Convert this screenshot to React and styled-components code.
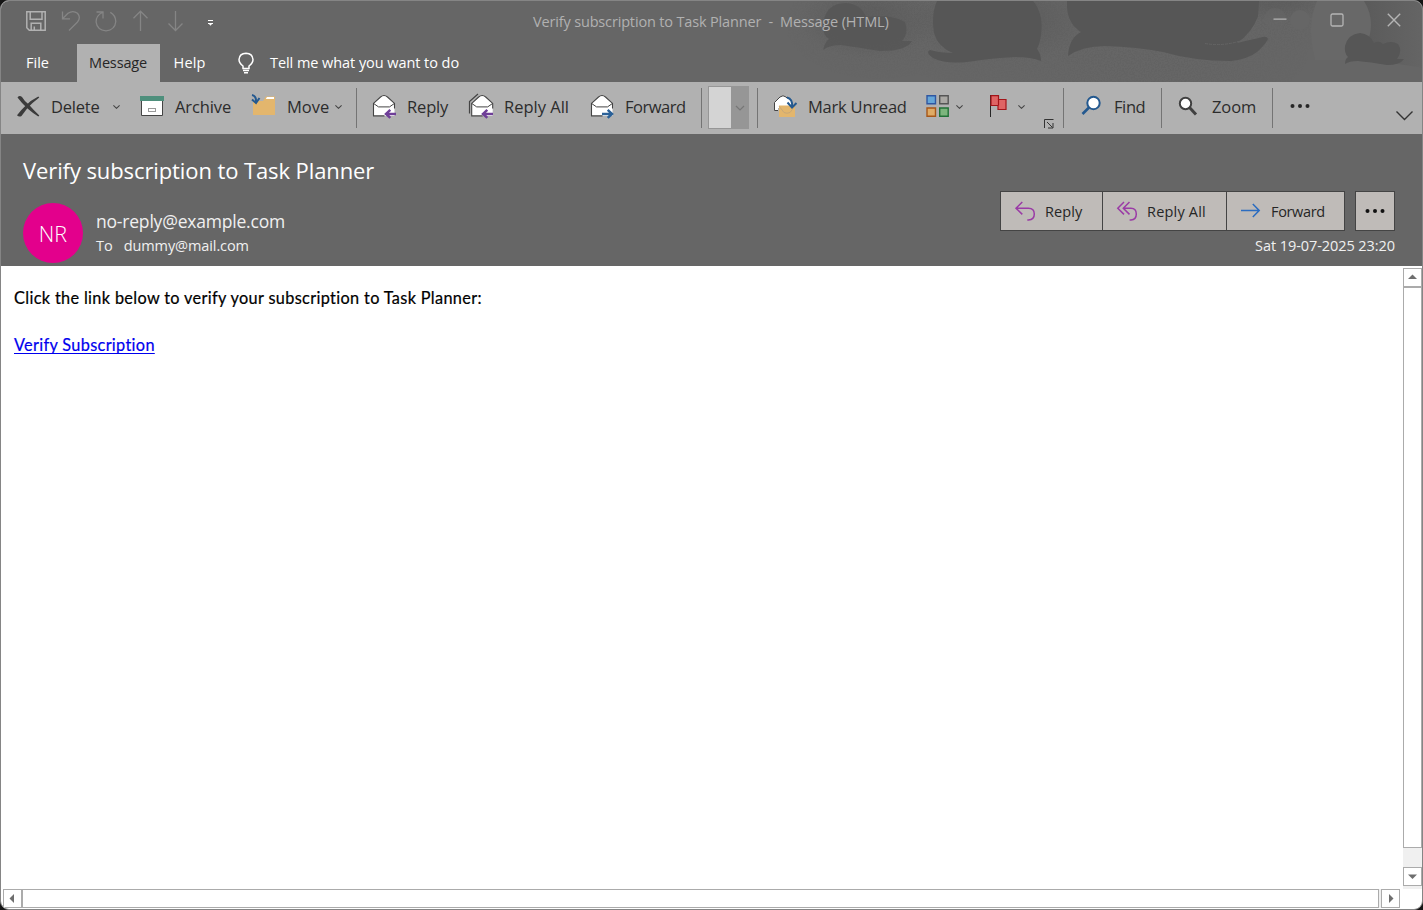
import React from "react";
import styled, { createGlobalStyle } from "styled-components";

const GlobalStyle = createGlobalStyle`
  * { box-sizing: border-box; }
  html, body { margin: 0; height: 100%; background: #151515; overflow: hidden; }
  #root { height: 100%; }
  button { border: 0; margin: 0; padding: 0; background: none; color: inherit; font: inherit; }
`;

const Window = styled.div`
  position: relative;
  display: flex;
  flex-direction: column;
  width: 1423px;
  height: 910px;
  overflow: hidden;
  border: 1px solid #858585;
  border-radius: 9px;
  background: #fff;
  font-family: "Open Sans", "Noto Sans", sans-serif;
`;

const Label = styled.span`
  display: block;
  white-space: pre;
  font-size: ${(p) => p.$size || 14.5}px;
  letter-spacing: ${(p) => p.$track || 0}px;
  line-height: 20px;
`;

/* top chrome */
const Chrome = styled.header`
  position: relative;
  flex: none;
  height: 81px;
  background: #666;
  display: flex;
  flex-direction: column;
`;
const Backdrop = styled.svg`
  position: absolute;
  top: 0;
  right: 0;
  display: block;
`;
const TitleBar = styled.div`
  position: relative;
  height: 43px;
  display: grid;
  grid-template-columns: 532px 1fr auto;
`;
const QuickAccess = styled.div`
  display: flex;
  align-items: center;
  gap: 11px;
  padding: 0 0 3px 23px;
  svg { display: block; }
`;
const WindowTitle = styled.div`
  padding-top: 11px;
  color: #b1b1b1;
`;
const WindowButtons = styled.div`
  display: flex;
  align-items: center;
  gap: 33px;
  padding: 0 16px 5px 0;
  button, svg { display: block; }
`;
const TabStrip = styled.nav`
  position: relative;
  height: 38px;
  display: flex;
  color: #fff;
`;
const Tab = styled.button`
  height: 38px;
  width: ${(p) => p.$width}px;
  display: flex;
  justify-content: center;
  align-items: center;
  padding-right: ${(p) => p.$right || 0}px;
  color: ${(p) => (p.$active ? "#262626" : "#fff")};
  background: ${(p) => (p.$active ? "#b1b1b1" : "transparent")};
`;
const TellMe = styled.div`
  display: flex;
  align-items: center;
  gap: 13px;
  margin-left: 16px;
`;

/* ribbon */
const Ribbon = styled.div`
  flex: none;
  height: 52px;
  display: flex;
  background: #b1b1b1;
  color: #2c2c2c;
`;
const Command = styled.button`
  height: 48px;
  width: ${(p) => p.$width}px;
  padding-left: ${(p) => p.$left || 0}px;
  padding-right: ${(p) => p.$right || 0}px;
  display: flex;
  align-items: center;
  gap: 11px;
  flex: none;
  > svg { flex: none; display: block; }
  > ${Label} { padding-top: 2px; }
`;
const Caret = styled.svg`
  margin: 1px 0 0 ${(p) => (p.$tight ? "-5px" : "auto")};
`;
const Divider = styled.span`
  flex: none;
  width: 1px;
  height: 40px;
  margin-top: 6px;
  background: #747474;
`;
const StepBox = styled.div`
  flex: none;
  width: 41px;
  height: 43px;
  margin: 4px 8px 0 6px;
  display: grid;
  grid-template-columns: 22px 1fr;
  border: 1px solid #969696;
  background: #d4d4d4;
`;
const StepArrow = styled.span`
  display: grid;
  place-items: center;
  background: #969696;
`;
const Launcher = styled.button`
  align-self: flex-end;
  margin: 0 9px 5px 0;
  height: 10px;
  svg { display: block; }
`;
const Collapse = styled.button`
  margin: 0 8px 13px auto;
  align-self: flex-end;
  svg { display: block; }
`;

/* message header */
const MessageHeader = styled.section`
  flex: none;
  height: 132px;
  padding: 22px 27px 0 22px;
  background: #666;
  color: #fff;
`;
const Subject = styled.h1`
  margin: 0;
  height: 47px;
  font-weight: 400;
  padding-top: 4px;
`;
const Sender = styled.div`
  display: flex;
`;
const Avatar = styled.div`
  width: 60px;
  height: 60px;
  border-radius: 50%;
  background: #e3008c;
  display: grid;
  place-items: center;
  font-weight: 300;
  padding-top: 2px;
`;
const Addresses = styled.div`
  margin: 8px 0 0 13px;
  color: #f0f0f0;
`;
const ToRow = styled.div`
  display: flex;
  gap: 11px;
  margin-top: 5px;
`;
const ActionColumn = styled.div`
  margin: -12px 0 0 auto;
  display: flex;
  flex-direction: column;
  align-items: flex-end;
  gap: 5px;
  color: #f0f0f0;
`;
const Actions = styled.div`
  display: flex;
  gap: 10px;
`;
const ActionGroup = styled.div`
  display: flex;
  border: 1px solid #444;
  background: #bfbbb8;
`;
const Action = styled.button`
  width: ${(p) => p.$width}px;
  height: 38px;
  padding-left: 13px;
  display: flex;
  align-items: center;
  gap: 9px;
  color: #262626;
  & + & { border-left: 1px solid #444; }
  svg { flex: none; display: block; }
  > ${Label} { padding-top: 2px; }
`;
const MoreAction = styled.button`
  width: 38px;
  height: 38px;
  display: grid;
  place-items: center;
  padding: 0 1px 1px 0;
  svg { display: block; }
`;

/* reading pane */
const Reader = styled.main`
  flex: 1;
  min-height: 0;
  display: grid;
  grid-template-columns: 1fr 20px;
  grid-template-rows: 1fr 20px;
`;
const Body = styled.article`
  padding: 22px 13px;
  font-family: Lato, sans-serif;
  color: #000;
  -webkit-text-stroke: 0.2px currentColor;
`;
const Link = styled.a`
  display: inline-block;
  margin-top: 27px;
  color: #0000ee;
  text-decoration: underline;
  text-decoration-thickness: 1px;
  text-underline-offset: 2px;
  text-decoration-skip-ink: none;
`;
const VScroll = styled.div`
  margin: 2px 0 0 1px;
  width: 19px;
  display: flex;
  flex-direction: column;
  background: #f0f0f0;
`;
const HScroll = styled.div`
  height: 19px;
  margin: 0 2px 0 2px;
  display: flex;
  background: #f0f0f0;
`;
const ScrollButton = styled.button`
  flex: none;
  width: 19px;
  height: 19px;
  border: 1px solid #ababab;
  background: #fff;
  display: grid;
  place-items: center;
  svg { display: block; }
`;
const VThumb = styled.div`
  height: 561px;
  border: 1px solid #ababab;
  background: #fff;
  margin-bottom: 19px;
`;
const HThumb = styled.div`
  width: 1357px;
  border: 1px solid #ababab;
  background: #fff;
  margin-right: 2px;
`;

const Icon = ({ w = 24, h = w, children, ...rest }) => (
  <svg width={w} height={h} viewBox={`0 0 ${w} ${h}`} fill="none" {...rest}>{children}</svg>
);

const CaretDown = ({ tight }) => (
  <Caret $tight={tight} width="7" height="4" viewBox="0 0 7 4" fill="none" stroke="#444" strokeWidth="1.1">
    <path d="M.4.4 3.5 3.3 6.6.4" />
  </Caret>
);

const Arrowhead = ({ d }) => (
  <Icon w={9} h={9}><path d={d} fill="#6e6e6e" /></Icon>
);

const Dots = ({ fill }) => (
  <Icon w={20} h={6} fill={fill}>
    <circle cx="2.5" cy="3" r="2" /><circle cx="10" cy="3" r="2" /><circle cx="17.5" cy="3" r="2" />
  </Icon>
);

const Envelope = () => (
  <>
    <path d="M1.5 10 9 3.2Q12 .8 15 3.2L22.5 10V22.5H1.5Z" fill="#fff" />
    <path d="M12.5 22.5H1.5V10L8.5 3.6Q12 .7 15.5 3.6L22.5 10V15" stroke="#444" strokeWidth="1.1" />
    <path d="M1.5 10 6.5 13.5H17.5L22.5 10" stroke="#444" />
  </>
);
const ArrowLeft = () => <path d="M24 20.5H13.5M18.3 16.5 14 20.5 18.3 24.5" stroke="#6f3f98" strokeWidth="2.5" />;
const ReplyMail = () => <Icon overflow="visible"><g transform="translate(0 -.6)"><Envelope /><ArrowLeft /></g></Icon>;
const ReplyAllMail = () => (
  <Icon overflow="visible">
    <path d="M.5 19.5V7.5L9 0" stroke="#444" strokeWidth="1.2" />
    <g transform="translate(1.2 -.6)"><Envelope /></g>
    <g transform="translate(0 -.6)"><ArrowLeft /></g>
  </Icon>
);
const ForwardMail = () => (
  <Icon overflow="visible">
    <g transform="translate(0 -.6)">
      <Envelope />
      <path d="M12 20.5H22.5M17.7 16.5 22 20.5 17.7 24.5" stroke="#2b6198" strokeWidth="2.5" />
    </g>
  </Icon>
);

const ReplyArrow = () => (
  <Icon w={22} stroke="#9a3ba6" strokeWidth="1.5">
    <path d="M8.3 2 2 8.2 8.3 14.4M2 8.2H14.5Q20.3 8.2 20.3 14T14.5 20H13.3" />
  </Icon>
);
const ReplyAllArrow = () => (
  <Icon w={22} stroke="#9a3ba6" strokeWidth="1.5">
    <path d="M8 2 1.8 8.2 8 14.4M13.5 2 7.3 8.2 13.5 14.4M7.3 8.2H15Q20.3 8.2 20.3 14T15 20H13.6" />
  </Icon>
);

const Art = () => (
  <Backdrop width="640" height="81" viewBox="782 1 640 81" fill="#565656">
    <defs>
      <filter id="grain" x="0" y="0" width="1" height="1">
        <feTurbulence type="fractalNoise" baseFrequency="0.7" numOctaves="1" seed="4" />
        <feColorMatrix values="0 0 0 0 .1  0 0 0 0 .1  0 0 0 0 .1  5 0 0 0 -2.2" />
        <feComposite in2="SourceGraphic" operator="in" />
      </filter>
      <radialGradient id="fade">
        <stop offset=".3" stopColor="#fff" stopOpacity=".9" />
        <stop offset="1" stopColor="#fff" stopOpacity="0" />
      </radialGradient>
      <radialGradient id="shade">
        <stop offset=".3" stopColor="#565656" stopOpacity=".45" />
        <stop offset="1" stopColor="#565656" stopOpacity="0" />
      </radialGradient>
      <linearGradient id="dusk" x1="0" x2="1">
        <stop offset="0" stopColor="#565656" />
        <stop offset="1" stopColor="#646464" />
      </linearGradient>
    </defs>
    <g fill="url(#shade)">
      <ellipse cx="868" cy="20" rx="70" ry="38" />
      <ellipse cx="1000" cy="18" rx="90" ry="44" />
      <ellipse cx="1276" cy="0" rx="60" ry="22" />
    </g>
    <path d="M1360 1H1422V68Q1400 63 1360 61Z" fill="url(#dusk)" opacity=".75" />
    <g filter="url(#grain)" opacity=".25">
      <ellipse cx="880" cy="24" rx="96" ry="56" fill="url(#fade)" />
      <ellipse cx="985" cy="26" rx="120" ry="60" fill="url(#fade)" />
      <ellipse cx="1150" cy="54" rx="160" ry="60" fill="url(#fade)" />
      <ellipse cx="1270" cy="8" rx="80" ry="50" fill="url(#fade)" />
    </g>
    <path d="M1317 1H1364Q1371 12 1371 25 1371 47 1350 60H1315Q1306 25 1317 1Z" fill="#686868" />
    <circle cx="1300" cy="20" r="10" fill="#666" />
    <circle cx="1275" cy="19" r="11" fill="#666" opacity=".6" />
    <path d="M823 50Q825 42 829 39 823 35 823 27 824 3 846 3 861 4 866 17 892 14 905 22 909 34 902 41L912 41Q907 51 880 51 856 47 841 45 829 45 823 50Z" opacity=".85" />
    <path d="M937 1Q931 14 934 33 938 47 953 53 940 53 930 50 925 52 933 58 945 64 967 62 992 58 1015 57 1031 57 1041 61 1041 54 1037 49 1043 36 1041 18 1038 6 1033 1Z" />
    <path d="M1067 1V7Q1068 24 1081 32 1069 38 1068 56 1082 46 1105 46 1138 47 1163 52 1194 61 1231 61 1248 59 1257 52 1265 45 1268 39 1267 36 1263 37 1245 41 1237 43 1252 33 1258 16L1259 1Z" />
    <path d="M1205 43.5Q1225 47 1246 39" fill="none" stroke="#646464" strokeWidth="1" strokeDasharray="3 1" />
    <path d="M1345 64Q1345 59 1348 57 1344 53 1345 46 1348 34 1360 33 1370 34 1374 43 1379 40 1383 44 1391 40 1398 44 1403 51 1397 59L1404 59Q1400 65 1387 65 1370 62 1358 61 1349 61 1345 64Z" />
  </Backdrop>
);

export default function App() {
  return (
    <>
      <GlobalStyle />
      <Window>
        <Chrome>
          <Art />
          <TitleBar>
            <QuickAccess>
              <Icon stroke="#b1b1b1" strokeWidth="1.5">
                <path d="M2.8 2.8H21.2V21.2H5.3L2.8 18.7ZM6.2 2.8V10.2H18V2.8M7.2 21V14.2H16.8V21M10.3 21V17.5" />
              </Icon>
              <Icon stroke="#858585" strokeWidth="1.3">
                <path d="M3.5 2.5V9.8H11M3.8 9.5 9 4.3Q14 .8 18.5 4.3 22.2 8.5 18.5 13L10 21.5" />
              </Icon>
              <Icon stroke="#858585" strokeWidth="1.3">
                <path d="M2.5 3H9V9.5M8.5 3.5Q2 6.5 2.1 13 3 21 12 21.8 21 21 21.8 12.5 21.5 6 16.3 3.3" />
              </Icon>
              <Icon stroke="#858585" strokeWidth="1.3">
                <path d="M11.5 22V2.2M4.5 9.2 11.5 2.2 18.5 9.2" />
              </Icon>
              <Icon stroke="#858585" strokeWidth="1.3">
                <path d="M11.5 2V21.5M4.5 14.5 11.5 21.5 18.5 14.5" />
              </Icon>
              <Icon fill="#fff">
                <path d="M9 11H14V12H9ZM9 14H14V15H13L11.5 16.8 10 15H9Z" />
              </Icon>
            </QuickAccess>
            <WindowTitle>
              <Label $track={-0.16}>{"Verify subscription to Task Planner  -  Message (HTML)"}</Label>
            </WindowTitle>
            <WindowButtons>
              <button aria-label="Minimize">
                <Icon stroke="#b5b5b5" strokeWidth="1.2"><path d="M5.5 11.2H18.5" /></Icon>
              </button>
              <button aria-label="Maximize">
                <Icon stroke="#b5b5b5" strokeWidth="1.3"><rect x="6" y="6" width="12" height="12" rx="1.5" /></Icon>
              </button>
              <button aria-label="Close">
                <Icon stroke="#b5b5b5" strokeWidth="1.4"><path d="M5.8 5.8 18.2 18.2M18.2 5.8 5.8 18.2" /></Icon>
              </button>
            </WindowButtons>
          </TitleBar>
          <TabStrip>
            <Tab $width={76} $right={3}><Label>File</Label></Tab>
            <Tab $width={83} $right={1} $active><Label $track={-0.15}>Message</Label></Tab>
            <Tab $width={59}><Label $track={0.1}>Help</Label></Tab>
            <TellMe>
              <Icon w={22} stroke="#fff" strokeWidth="1.5">
                <path d="M8 16.5V14Q4 11 4 7.5 4.5 1.5 11 1.3 17.5 1.5 18 7.5 18 11 14 14V16.5ZM8 18.5H14M9 20.7H13" />
              </Icon>
              <Label $track={-0.06}>Tell me what you want to do</Label>
            </TellMe>
          </TabStrip>
        </Chrome>

        <Ribbon>
          <Command $width={139} $left={15} $right={20}>
            <Icon>
              <path d="M1.5 3.5Q3.5.8 6 3 9 8 13 10.8 17 15.5 23.3 21.5L22.3 22.5Q16 18.5 11.5 14.5 6 9.5 1.5 3.5Z" fill="#3b3b3b" />
              <path d="M22.3 2.5 23.3 3.5Q16 9 11.5 14 8.5 18 5.5 22 3 23.5 1 21.2 5 16 9.8 11.5 15 6 22.3 2.5Z" fill="#3b3b3b" />
            </Icon>
            <Label $size={16.5} $track={-0.2}>Delete</Label>
            <CaretDown />
          </Command>
          <Command $width={112}>
            <Icon>
              <path d="M1.5 7V21.5H22.5V7" fill="#fff" stroke="#444" />
              <path d="M0 2H24V7H0Z" fill="#4e8f7c" />
              <rect x="8.5" y="14.5" width="7" height="3" stroke="#999" />
            </Icon>
            <Label $size={16.5} $track={-0.1}>Archive</Label>
          </Command>
          <Command $width={104}>
            <Icon overflow="visible">
              <path d="M1 7H11L14 2.5H23V21H1Z" fill="#e3b66d" />
              <path d="M15 3H22V5H13.8Z" fill="#fff" />
              <path d="M0 1Q4.5 2 4 8M0 5.5 4 9 7.5 4" stroke="#24598f" strokeWidth="2" />
            </Icon>
            <Label $size={16.5}>Move</Label>
            <CaretDown tight />
          </Command>
          <Divider />
          <Command $width={112} $left={15}><ReplyMail /><Label $size={16.5} $track={-0.15}>Reply</Label></Command>
          <Command $width={121}><ReplyAllMail /><Label $size={16.5}>Reply All</Label></Command>
          <Command $width={111}><ForwardMail /><Label $size={16.5} $track={-0.5}>Forward</Label></Command>
          <Divider />
          <StepBox>
            <span />
            <StepArrow>
              <Icon w={10} h={6} stroke="#777" strokeWidth="1.2"><path d="M1 1 5 5 9 1" /></Icon>
            </StepArrow>
          </StepBox>
          <Divider />
          <Command $width={168} $left={15}>
            <Icon overflow="visible">
              <path d="M1.5 17V8.5L7 3Q10 .5 13 3L18 7V14H5V17Z" fill="#fff" />
              <path d="M5 16.5H1.5V8.5L7 3Q10 .5 13 3L14 4" stroke="#444" />
              <path d="M6 11.5H22V23H6Z" fill="#e3b66d" />
              <path d="M6 12 11 18.5Q14 20 17 18.5L22 12" stroke="#c8a878" />
              <path d="M14 3.5Q20 5 19 13M14.5 8.5 19 13.5 23.5 9" stroke="#24598f" strokeWidth="2" />
            </Icon>
            <Label $size={16.5} $track={-0.22}>Mark Unread</Label>
          </Command>
          <Command $width={63}>
            <Icon>
              <path d="M1 1.7H9.5V9.8H1Z" fill="#65a6d8" stroke="#2f57a2" strokeWidth="1.4" />
              <path d="M13.7 1.7H22.2V9.8H13.7Z" fill="#aaa8a4" stroke="#555" strokeWidth="1.4" />
              <path d="M1 14H9.5V22.2H1Z" fill="#dfab65" stroke="#a65619" strokeWidth="1.4" />
              <path d="M13.7 14H22.2V22.2H13.7Z" fill="#7cb57d" stroke="#207036" strokeWidth="1.4" />
            </Icon>
            <CaretDown tight />
          </Command>
          <Command $width={55}>
            <Icon w={23} h={24}>
              <path d="M1.5 1V23" stroke="#262626" />
              <path d="M2 1.6H9.5V5.5H17V15.5H9V11.5H2Z" fill="#df6464" stroke="#a31419" strokeWidth="1.2" />
              <path d="M9.5 5V11.5" stroke="#a31419" strokeWidth="1.2" />
            </Icon>
            <CaretDown tight />
          </Command>
          <Launcher aria-label="Launcher">
            <Icon w={10} stroke="#333"><path d="M.5 9V.5H9.5M3 3 8.5 8.5M9 4V9H4" /></Icon>
          </Launcher>
          <Divider />
          <Command $width={97} $left={15}>
            <Icon>
              <circle cx="14.5" cy="9" r="6.2" fill="#fff" stroke="#24598f" strokeWidth="2" />
              <path d="M10 13.5 3.5 20" stroke="#24598f" strokeWidth="2.6" />
            </Icon>
            <Label $size={16.5} $track={-0.4}>Find</Label>
          </Command>
          <Divider />
          <Command $width={110} $left={15}>
            <Icon>
              <circle cx="8.5" cy="9.5" r="5.7" fill="#fff" stroke="#404040" strokeWidth="2" />
              <path d="M12.5 13.5 19 20.5" stroke="#404040" strokeWidth="3" />
            </Icon>
            <Label $size={16.5} $track={-0.1}>Zoom</Label>
          </Command>
          <Divider />
          <Command $width={60} $left={17} aria-label="More commands"><Dots fill="#262626" /></Command>
          <Collapse aria-label="Collapse">
            <Icon w={19} h={11} stroke="#333" strokeWidth="1.4"><path d="M1.5 1.5 9.5 9.5 17.5 1.5" /></Icon>
          </Collapse>
        </Ribbon>

        <MessageHeader>
          <Subject><Label $size={22} $track={-0.1}>Verify subscription to Task Planner</Label></Subject>
          <Sender>
            <Avatar><Label $size={21.5}>NR</Label></Avatar>
            <Addresses>
              <Label $size={17.5} $track={-0.2}>no-reply@example.com</Label>
              <ToRow><Label>To</Label><Label $track={-0.1}>dummy@mail.com</Label></ToRow>
            </Addresses>
            <ActionColumn>
              <Actions>
                <ActionGroup>
                  <Action $width={101}><ReplyArrow /><Label $track={0.1}>Reply</Label></Action>
                  <Action $width={124}><ReplyAllArrow /><Label $track={0.2}>Reply All</Label></Action>
                  <Action $width={118}>
                    <Icon w={22} stroke="#2b6cc0" strokeWidth="1.5"><path d="M1 10.5H19M12.8 4 19.2 10.5 12.8 17" /></Icon>
                    <Label $track={-0.35}>Forward</Label>
                  </Action>
                </ActionGroup>
                <ActionGroup>
                  <MoreAction aria-label="More"><Dots fill="#111" /></MoreAction>
                </ActionGroup>
              </Actions>
              <Label $track={-0.07}>Sat 19-07-2025 23:20</Label>
            </ActionColumn>
          </Sender>
        </MessageHeader>

        <Reader>
          <Body>
            <Label $size={16.3} $track={0.34}>Click the link below to verify your subscription to Task Planner:</Label>
            <Link><Label $size={16.3} $track={0.32}>Verify Subscription</Label></Link>
          </Body>
          <VScroll>
            <ScrollButton><Arrowhead d="M0 6 4.5 1.5 9 6Z" /></ScrollButton>
            <VThumb />
            <ScrollButton><Arrowhead d="M0 2.5 4.5 7 9 2.5Z" /></ScrollButton>
          </VScroll>
          <HScroll>
            <ScrollButton><Arrowhead d="M6 0 1.5 4.5 6 9Z" /></ScrollButton>
            <HThumb />
            <ScrollButton><Arrowhead d="M3 0 7.5 4.5 3 9Z" /></ScrollButton>
          </HScroll>
        </Reader>
      </Window>
    </>
  );
}
